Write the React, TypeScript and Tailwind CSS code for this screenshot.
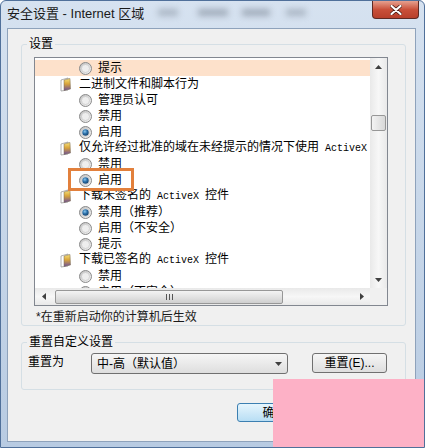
import React from "react";

type Row = { t: "r" | "c"; label: string; ax?: string; tail?: string; on?: boolean; hl?: boolean };

const rows: Row[] = [
  { t: "r", label: "提示", hl: true },
  { t: "c", label: "二进制文件和脚本行为" },
  { t: "r", label: "管理员认可" },
  { t: "r", label: "禁用" },
  { t: "r", label: "启用", on: true },
  { t: "c", label: "仅允许经过批准的域在未经提示的情况下使用", ax: " ActiveX" },
  { t: "r", label: "禁用" },
  { t: "r", label: "启用", on: true },
  { t: "c", label: "下载未签名的", ax: " ActiveX ", tail: "控件" },
  { t: "r", label: "禁用（推荐）", on: true },
  { t: "r", label: "启用（不安全）" },
  { t: "r", label: "提示" },
  { t: "c", label: "下载已签名的", ax: " ActiveX ", tail: "控件" },
  { t: "r", label: "禁用" },
  { t: "r", label: "启用（不安全）" },
];

function Radio({ on }: { on?: boolean }) {
  return (
    <svg width="13" height="13" viewBox="0 0 13 13" className="shrink-0">
      <defs>
        <linearGradient id="rb" x1="0" y1="0" x2="1" y2="1">
          <stop offset="0" stopColor="#bdbdbd" />
          <stop offset="1" stopColor="#f8f8f8" />
        </linearGradient>
        <radialGradient id="rd" cx="0.4" cy="0.35" r="0.7">
          <stop offset="0" stopColor="#8cc8f0" />
          <stop offset="0.5" stopColor="#2a6fa8" />
          <stop offset="1" stopColor="#17406a" />
        </radialGradient>
      </defs>
      <circle cx="6.5" cy="6.5" r="6" fill="url(#rb)" stroke="#8a8a8a" />
      <circle cx="6.5" cy="6.5" r="4" fill="#eeeeee" stroke="#c4c4c4" strokeWidth="0.6" />
      {on && <circle cx="6.5" cy="6.5" r="3.2" fill="url(#rd)" />}
    </svg>
  );
}

function CatIcon() {
  return (
    <svg width="12" height="15" viewBox="0 0 12 15" className="shrink-0">
      <defs>
        <linearGradient id="ci" x1="0" y1="0" x2="0" y2="1">
          <stop offset="0" stopColor="#f7e27a" />
          <stop offset="0.45" stopColor="#d9a43a" />
          <stop offset="1" stopColor="#6a4f9c" />
        </linearGradient>
      </defs>
      <path d="M1 3 L8 1 L8 13 L1 14 Z" fill="#ffffff" stroke="#9a9a9a" strokeWidth="0.8" />
      <path d="M4 3 L10 1.5 L10.5 12 L4 13.5 Z" fill="url(#ci)" stroke="#7a6a50" strokeWidth="0.5" />
    </svg>
  );
}

function Arrow({ dir }: { dir: "up" | "down" | "left" | "right" }) {
  const d =
    dir === "up" ? "M0 4 L3.5 0 L7 4 Z" :
    dir === "down" ? "M0 0 L7 0 L3.5 4 Z" :
    dir === "left" ? "M4 0 L4 7 L0 3.5 Z" : "M0 0 L4 3.5 L0 7 Z";
  const vert = dir === "up" || dir === "down";
  return (
    <svg width={vert ? 7 : 4} height={vert ? 4 : 7} viewBox={vert ? "0 0 7 4" : "0 0 4 7"}>
      <path d={d} fill="#404040" />
    </svg>
  );
}

export default function App() {
  return (
    <div className="w-[425px] h-[448px] relative overflow-hidden flex flex-col bg-gradient-to-b from-[#d6e2f0] to-[#b8cbe2] border border-[#50709a] rounded-t-[6px] text-black text-[12px] leading-[16px] font-['Liberation_Sans','Noto_Sans_CJK_SC',sans-serif]">
      {/* 标题栏 */}
      <div className="h-[27px] flex items-start shrink-0">
        <div className="mt-[5px] ml-[6px] text-[13px] leading-[16px] text-[#1a1a1a]">安全设置 - Internet 区域</div>
        <div className="mt-[8px] ml-[14px] w-[20px] h-[7px] bg-[#8f9aa8] opacity-60 blur-[3px]" />
        <div className="mt-[8px] ml-[20px] w-[30px] h-[7px] bg-[#7d8896] opacity-60 blur-[3px]" />
        <div className="mt-[8px] ml-[14px] w-[28px] h-[7px] bg-[#7d8896] opacity-60 blur-[3px]" />
        <div className="mt-[8px] ml-[16px] w-[20px] h-[7px] bg-[#8f9aa8] opacity-60 blur-[3px]" />
        <div className="ml-auto mr-[5px] w-[47px] h-[18px] rounded-b-[4px] border border-t-0 border-[#5e2a24] bg-gradient-to-b from-[#e5a08f] via-[#c9503a] to-[#b8402c] flex items-center justify-center">
          <svg width="12" height="10" viewBox="0 0 12 10">
            <path d="M1.5 1 L10.5 9 M10.5 1 L1.5 9" stroke="#4a1a12" strokeWidth="3.6" strokeLinecap="round" />
            <path d="M1.5 1 L10.5 9 M10.5 1 L1.5 9" stroke="#ffffff" strokeWidth="2.2" strokeLinecap="round" />
          </svg>
        </div>
      </div>

      {/* 窗口内容 */}
      <div className="flex-1 ml-[6px] mr-[8px] mb-[5px] bg-[#f0f0f0] border border-[#8ea2bb] flex flex-col">
        {/* 设置 */}
        <div className="mt-[15px] ml-[13px] w-[385px] border border-[#d5dfe5] rounded-[3px] flex flex-col">
          <div className="-mt-[9px] ml-[5px] px-[2px] w-fit bg-[#f0f0f0]">设置</div>
          <div className="mt-[5px] ml-[12px] w-[354px] h-[249px] border border-[#828790] bg-white grid grid-cols-[1fr_17px] grid-rows-[1fr_17px]">
            <div className="relative overflow-hidden pt-[2px] flex flex-col">
              {rows.map((r, i) =>
                r.t === "c" ? (
                  <div key={i} className="h-[16px] shrink-0 flex items-center pl-[25px] gap-[7px] whitespace-nowrap">
                    <CatIcon />
                    <span>
                      {r.label}
                      {r.ax && <span className="font-['Liberation_Mono',monospace] text-[10px] whitespace-pre">{r.ax}</span>}
                      {r.tail}
                    </span>
                  </div>
                ) : (
                  <div
                    key={i}
                    className={`h-[16px] shrink-0 flex items-center pl-[44px] gap-[6px] whitespace-nowrap ${r.hl ? "bg-[#fde1cb]" : ""}`}
                  >
                    <Radio on={r.on} />
                    <span>{r.label}</span>
                  </div>
                )
              )}
              <div className="absolute left-[33px] top-[110px] w-[66px] h-[23px] border-[3px] border-[#e2803c]" />
            </div>
            {/* 竖滚动条 */}
            <div className="bg-gradient-to-r from-[#e9e9e9] via-[#f7f7f7] to-[#e9e9e9] flex flex-col">
              <div className="h-[17px] flex items-center justify-center"><Arrow dir="up" /></div>
              <div className="h-[40px]" />
              <div className="ml-[1px] w-[15px] h-[16px] rounded-[2px] border border-[#979797] bg-gradient-to-r from-[#f3f3f3] to-[#d8d8d8]" />
              <div className="flex-1" />
              <div className="h-[17px] flex items-center justify-center"><Arrow dir="down" /></div>
            </div>
            {/* 横滚动条 */}
            <div className="bg-gradient-to-b from-[#e9e9e9] via-[#f7f7f7] to-[#e9e9e9] flex items-center">
              <div className="w-[17px] h-full flex items-center justify-center"><Arrow dir="left" /></div>
              <div className="ml-[3px] w-[228px] h-[14px] rounded-[2px] border border-[#979797] bg-gradient-to-b from-[#f3f3f3] via-[#e2e2e2] to-[#cfcfcf] flex items-center justify-center">
                <div className="flex gap-[2px]">
                  <div className="w-[1px] h-[6px] bg-[#555]" />
                  <div className="w-[1px] h-[6px] bg-[#555]" />
                  <div className="w-[1px] h-[6px] bg-[#555]" />
                </div>
              </div>
              <div className="flex-1" />
              <div className="w-[17px] h-full flex items-center justify-center"><Arrow dir="right" /></div>
            </div>
            <div className="bg-[#f0f0f0]" />
          </div>
          <div className="mt-[3px] ml-[14px] h-[16px] text-[#1a1a1a]">*在重新启动你的计算机后生效</div>
        </div>

        {/* 重置自定义设置 */}
        <div className="mt-[16px] ml-[13px] w-[385px] border border-[#d5dfe5] rounded-[3px] flex flex-col pb-[15px]">
          <div className="-mt-[9px] ml-[5px] px-[2px] w-fit bg-[#f0f0f0]">重置自定义设置</div>
          <div className="mt-[3px] flex items-start">
            <div className="ml-[6px] w-[63px] pt-[1px]">重置为</div>
            <div className="w-[197px] h-[21px] rounded-[3px] border border-[#707070] bg-gradient-to-b from-[#f6f6f6] to-[#dedede] flex items-center pl-[5px] pr-[5px]">
              <span className="flex-1">中-高（默认值）</span>
              <Arrow dir="down" />
            </div>
            <div className="ml-[24px] w-[75px] h-[20px] rounded-[3px] border border-[#707070] bg-gradient-to-b from-[#f6f6f6] to-[#dedede] flex items-center justify-center">
              重置(E)...
            </div>
          </div>
        </div>

        {/* 按钮 */}
        <div className="mt-[13px] flex gap-[6px] ml-[229px]">
          <div className="w-[75px] h-[19px] rounded-[3px] border border-[#3c7fb1] bg-gradient-to-b from-[#e6f5fd] to-[#b8def4] flex items-center justify-center">
            确定
          </div>
          <div className="w-[75px] h-[19px] rounded-[3px] border border-[#707070] bg-gradient-to-b from-[#f6f6f6] to-[#dedede] flex items-center justify-center">
            取消
          </div>
        </div>
      </div>

      <div className="absolute right-0 bottom-0 w-[151px] h-[68px] bg-[#fdb1c6]" />
    </div>
  );
}
